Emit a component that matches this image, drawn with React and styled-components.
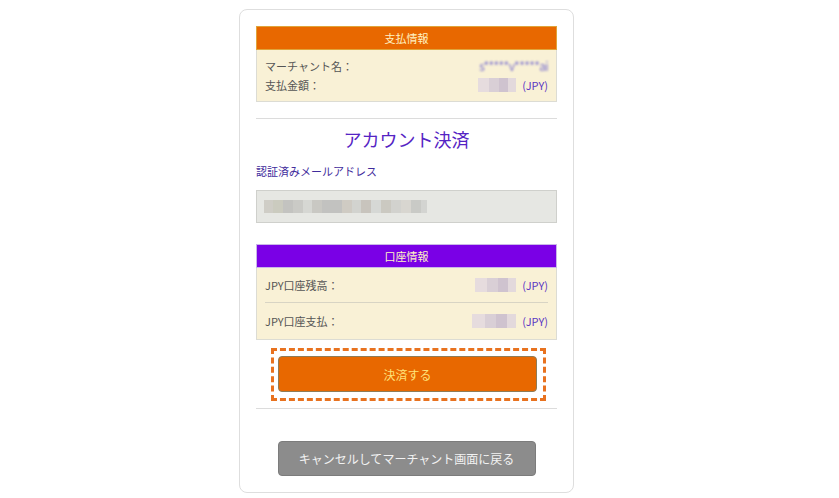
import React from "react";
import styled, { createGlobalStyle } from "styled-components";

const Global = createGlobalStyle`
  html, body { margin: 0; background: #fff; }
  body { font-family: "Noto Sans CJK JP", "Noto Sans", sans-serif; }
`;

export const Page = styled.div`
  padding: 9px 0 0 239px;
`;

export const Card = styled.div`
  box-sizing: border-box;
  width: 335px;
  border: 1px solid #dedede;
  border-radius: 8px;
  padding: 16px 16px 16px;
  background: #fff;
`;

export const InfoBox = styled.div`
  border: 1px solid #dcdcd4;
  border-top: none;
`;

export const InfoHead = styled.div`
  height: 24px;
  margin: 0 -1px;
  background: ${(p) => p.bg};
  border: 1px solid ${(p) => p.line};
  box-sizing: border-box;
  color: #fff3c4;
  font-size: 11px;
  line-height: 22px;
  text-align: center;
`;

export const InfoBody = styled.div`
  background: #f9f1d6;
  padding: ${(p) => p.pad || "0 8px"};
`;

export const Row = styled.div`
  display: flex;
  align-items: center;
  justify-content: space-between;
  height: ${(p) => p.h}px;
  color: #555;
  font-size: 11px;
`;

export const RowDivider = styled.div`
  height: 1px;
  background: #d8d4c4;
`;

export const Value = styled.span`
  display: flex;
  align-items: center;
  gap: 6px;
`;

export const Jpy = styled.span`
  color: #5a36c4;
  font-size: 11px;
`;

export const BlurName = styled.span`
  color: #7d74cf;
  font-size: 12px;
  filter: blur(1.2px);
  letter-spacing: -0.6px;
`;

export const BlurAmount = styled.span`
  display: block;
  width: ${(p) => p.w}px;
  height: 14px;
  background: linear-gradient(
    90deg,
    #e6dcde 0 30%,
    #d9cfd6 30% 55%,
    #cfc3cf 55% 80%,
    #e3d9dc 80% 100%
  );
  filter: blur(0.6px);
`;

export const Rule = styled.hr`
  border: none;
  border-top: 1px solid #dcdcdc;
  margin: ${(p) => p.m};
`;

export const Title = styled.h2`
  margin: 8px 0 0;
  font-weight: normal;
  font-size: 18px;
  line-height: 24px;
  text-align: center;
  color: #5524c4;
`;

export const FieldLabel = styled.div`
  margin-top: 12px;
  font-size: 11px;
  line-height: 16px;
  color: #3f2c9c;
`;

export const EmailBox = styled.div`
  box-sizing: border-box;
  height: 33px;
  margin-top: 11px;
  background: #e6e7e3;
  border: 1px solid #cfd0cc;
  display: flex;
  align-items: center;
  padding-left: 7px;
`;

export const Pixel = styled.span`
  display: block;
  width: ${(p) => p.w}px;
  height: 13px;
  background: ${(p) => p.c};
`;

export const Spacer = styled.div`
  height: ${(p) => p.h}px;
`;

export const DashFrame = styled.div`
  box-sizing: border-box;
  width: 275px;
  margin: 8px 0 0 15px;
  padding: 5px 6px 6px 4px;
  border: 3px dashed #e8721f;
`;

export const Button = styled.button`
  display: block;
  box-sizing: border-box;
  width: ${(p) => p.w || "100%"};
  height: ${(p) => p.h}px;
  margin: ${(p) => p.m || "0"};
  border-radius: 4px;
  border: 1px solid ${(p) => p.line};
  background: ${(p) => p.bg};
  color: ${(p) => p.fg};
  font-family: "Noto Sans CJK JP", sans-serif;
  font-size: 12px;
  cursor: pointer;
`;

const emailBlocks = [
  ["#cfcdc6", 9], ["#cbcbbf", 10], ["#c3c3c0", 10], ["#cacac6", 10],
  ["#d6d7d3", 9], ["#c9c8c3", 10], ["#c2c2c0", 20], ["#cfcbc3", 10],
  ["#d2d3cf", 9], ["#c8c4bd", 10], ["#d6d8d5", 10], ["#cbc9c1", 10],
  ["#d2d2ce", 10], ["#d8d6d0", 10], ["#c9cac6", 10], ["#d3d4d1", 6],
];

export default function App() {
  return (
    <>
      <Global />
      <Page>
        <Card>
          <InfoBox>
            <InfoHead bg="#e86800" line="#e0a43a">支払情報</InfoHead>
            <InfoBody pad="6px 8px 7px">
              <Row h={19}>
                <span>マーチャント名：</span>
                <BlurName>s*****v*****ai</BlurName>
              </Row>
              <Row h={19}>
                <span>支払金額：</span>
                <Value>
                  <BlurAmount w={38} />
                  <Jpy>(JPY)</Jpy>
                </Value>
              </Row>
            </InfoBody>
          </InfoBox>

          <Rule m="16px 0 0" />
          <Title>アカウント決済</Title>
          <FieldLabel>認証済みメールアドレス</FieldLabel>
          <EmailBox>
            {emailBlocks.map(([c, w], i) => (
              <Pixel key={i} c={c} w={w} />
            ))}
          </EmailBox>

          <Spacer h={21} />
          <InfoBox>
            <InfoHead bg="#7a00e6" line="#c9b6e8">口座情報</InfoHead>
            <InfoBody>
              <Row h={34}>
                <span>JPY口座残高：</span>
                <Value>
                  <BlurAmount w={41} />
                  <Jpy>(JPY)</Jpy>
                </Value>
              </Row>
              <RowDivider />
              <Row h={36}>
                <span>JPY口座支払：</span>
                <Value>
                  <BlurAmount w={44} />
                  <Jpy>(JPY)</Jpy>
                </Value>
              </Row>
            </InfoBody>
          </InfoBox>

          <DashFrame>
            <Button h={36} bg="#e86800" line="#8e7c58" fg="#ffe27a">
              決済する
            </Button>
          </DashFrame>

          <Rule m="7px 0 0" />
          <Button
            w="258px"
            h={35}
            m="32px auto 0"
            bg="#8c8c8c"
            line="#7c7c7c"
            fg="#f2f2f2"
          >
            キャンセルしてマーチャント画面に戻る
          </Button>
        </Card>
      </Page>
    </>
  );
}
